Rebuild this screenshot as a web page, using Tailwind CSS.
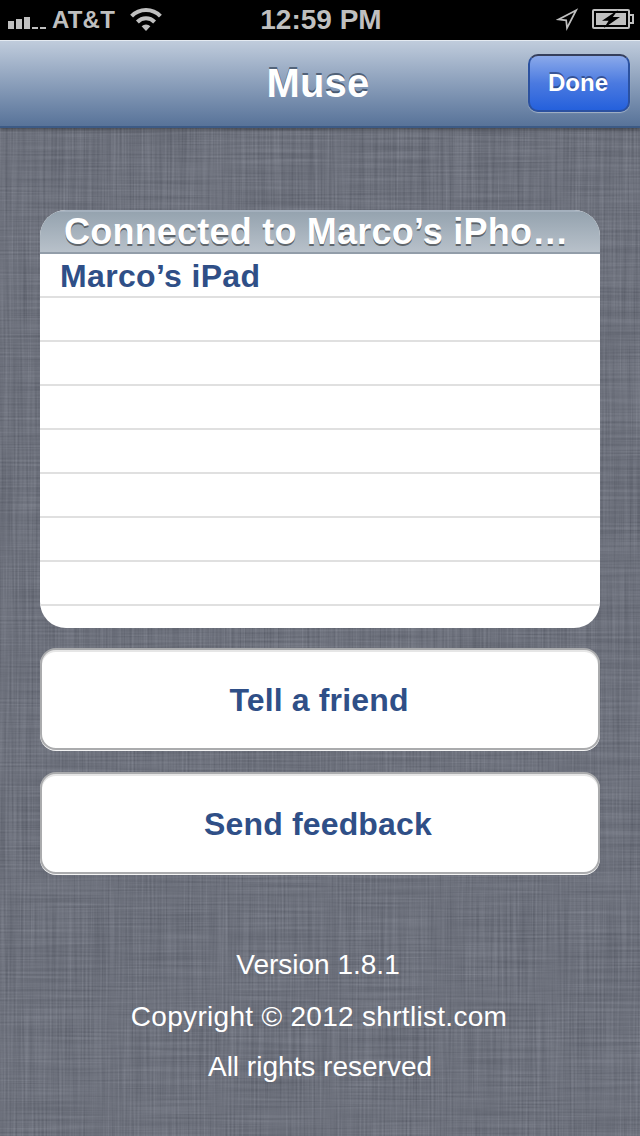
<!DOCTYPE html>
<html lang="en">
<head>
    <meta charset="UTF-8">
    <meta name="viewport" content="width=device-width, initial-scale=1.0">
    <title>Muse</title>
    <script src="https://cdn.jsdelivr.net/npm/@tailwindcss/browser@4"></script>
</head>
<body class="relative isolate h-[1136px] w-[640px] overflow-hidden bg-[#6e727d] font-['Liberation_Sans',Arial,sans-serif] antialiased">
    <!-- Linen texture -->
    <svg class="absolute inset-0 -z-10 h-full w-full" aria-hidden="true">
        <filter id="weft" x="0" y="0" width="100%" height="100%" color-interpolation-filters="sRGB">
            <feTurbulence type="fractalNoise" baseFrequency="0.009 0.5" numOctaves="2" seed="4"/>
            <feColorMatrix values="0.45 0 0 0 0.205  0.45 0 0 0 0.22  0.45 0 0 0 0.265  0 0 0 0 1"/>
        </filter>
        <filter id="warp" x="0" y="0" width="100%" height="100%" color-interpolation-filters="sRGB">
            <feTurbulence type="fractalNoise" baseFrequency="0.5 0.009" numOctaves="2" seed="9"/>
            <feColorMatrix values="0.45 0 0 0 0.205  0.45 0 0 0 0.22  0.45 0 0 0 0.265  0 0 0 0 1"/>
        </filter>
        <rect width="640" height="1136" filter="url(#weft)" opacity="0.35"/>
        <rect width="640" height="1136" filter="url(#warp)" opacity="0.28"/>
    </svg>

    <!-- Status bar -->
    <div class="grid h-10 grid-cols-[1fr_auto_1fr] items-center bg-black text-[#bfbfbf]">
        <div class="flex items-center pl-2">
            <svg class="h-10 w-[38px]" viewBox="0 0 38 40" fill="currentColor" aria-hidden="true">
                <path d="M0 21h6v8H0zM8 19h6v10H8zM16 17h6v12h-6zM24 27h6v2h-6zM32 27h6v2h-6z"/>
            </svg>
            <span class="ml-[6px] text-2xl leading-10 font-bold tracking-[0.2px]">AT&amp;T</span>
            <svg class="ml-[15px] h-10 w-8" viewBox="0 0 32 40" fill="none" stroke="currentColor" stroke-width="4" aria-hidden="true">
                <path d="M1.6 16.2a20 20 0 0 1 28.8 0M7.4 22a12 12 0 0 1 17.2 0"/>
                <path d="M11.6 26.3a6.3 6.3 0 0 1 8.8 0L16 31z" fill="currentColor" stroke="none"/>
            </svg>
        </div>
        <span class="pl-0.5 text-[28px] leading-10 font-bold">12:59 PM</span>
        <div class="flex items-center justify-end pr-[5px]">
            <svg class="h-10 w-6" viewBox="0 0 24 40" fill="none" stroke="currentColor" stroke-width="1.7" aria-hidden="true">
                <path d="M20.2 10.2 2.5 19.4l7.7.9.8 7.7z"/>
            </svg>
            <svg class="ml-3 h-10 w-[43px]" viewBox="0 0 43 40" aria-hidden="true">
                <rect x="1" y="10" width="36" height="18" rx="1" fill="none" stroke="currentColor" stroke-width="2"/>
                <path d="M4 13h30v12H4zM38 14h4v10h-4v-2h2v-6h-2z" fill="currentColor"/>
                <path d="M26 10 10 20.8h6.6L12 28l16-11h-7.2z" fill="#000"/>
            </svg>
        </div>
    </div>

    <!-- Navigation bar -->
    <header class="grid h-[88px] grid-cols-[1fr_auto_1fr] items-center border-t border-b-2 border-t-[#e4eaf1] border-b-[#3c5a85] bg-linear-to-b from-[#c0ccdc] to-[#587399] shadow-[0_1px_4px_rgba(0,0,0,0.45)]">
        <h1 class="col-start-2 pr-1 pb-0.5 text-[40px] leading-[82px] font-bold tracking-[0.2px] text-white [text-shadow:0_-2px_0_rgba(40,55,75,0.65)]">Muse</h1>
        <button class="mr-[10px] mb-0.5 h-[58px] w-[102px] justify-self-end rounded-[10px] border-2 border-[#2b51a0] border-t-[#363f5c] bg-linear-to-b from-[#8ba9ea] via-[#4b7ae0] to-[#2460dc] pr-0.5 text-2xl font-bold text-white shadow-[0_1px_1px_rgba(255,255,255,0.4)] [text-shadow:0_-2px_0_rgba(30,50,100,0.6)]">Done</button>
    </header>

    <main class="flex flex-col px-10 pt-[82px]">
        <!-- Connected devices -->
        <section class="h-[418px] overflow-hidden rounded-[26px] bg-white">
            <h2 class="h-11 border-t-2 border-b-2 border-t-[#a4b0bd] border-b-[#929da9] bg-linear-to-b from-[#95a3af] to-[#b8c1ca] pl-6 text-4xl leading-[40px] font-bold tracking-[0.22px] whitespace-nowrap text-white [text-shadow:0_2px_0_rgba(70,75,80,0.75)]">Connected to Marco’s iPho…</h2>
            <ul>
                <li class="h-11 border-b-2 border-[#e0e0e0] pl-5 text-[32px] leading-[44px] font-bold tracking-[0.35px] text-[#2f4f87]">Marco’s iPad</li>
                <li class="h-11 border-b-2 border-[#e0e0e0]"></li>
                <li class="h-11 border-b-2 border-[#e0e0e0]"></li>
                <li class="h-11 border-b-2 border-[#e0e0e0]"></li>
                <li class="h-11 border-b-2 border-[#e0e0e0]"></li>
                <li class="h-11 border-b-2 border-[#e0e0e0]"></li>
                <li class="h-11 border-b-2 border-[#e0e0e0]"></li>
                <li class="h-11 border-b-2 border-[#e0e0e0]"></li>
            </ul>
        </section>

        <!-- Actions -->
        <button class="mt-5 h-[102px] rounded-[16px] border-2 border-[#aaabad] bg-white pt-0.5 pr-0.5 text-[32px] font-bold tracking-[0.15px] text-[#2f4f87] shadow-[0_1px_0_#f4f4f4,inset_0_2px_0_#e6e6e6]">Tell a friend</button>
        <button class="mt-[22px] h-[102px] rounded-[16px] border-2 border-[#aaabad] bg-white pt-0.5 pr-1 text-[32px] font-bold tracking-[0.15px] text-[#2f4f87] shadow-[0_1px_0_#f4f4f4,inset_0_2px_0_#e6e6e6]">Send feedback</button>
    </main>

    <footer class="flex flex-col items-center pt-[65px] pr-1 text-[28px] leading-[51px] text-white">
        <p>Version 1.8.1</p>
        <p class="pt-px pl-0.5 tracking-[0.3px]">Copyright © 2012 shrtlist.com</p>
        <p class="-mt-px pl-1">All rights reserved</p>
    </footer>
</body>
</html>
